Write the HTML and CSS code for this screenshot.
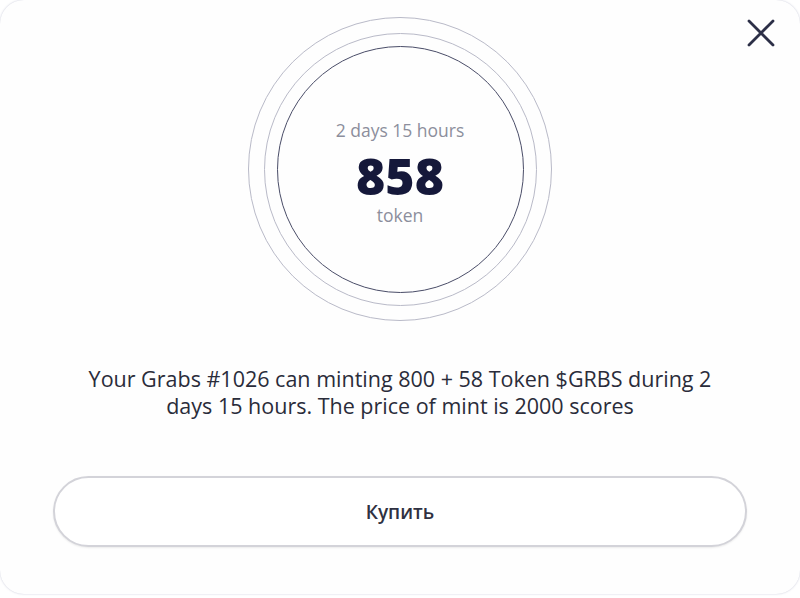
FILE: index.html
```html
<!DOCTYPE html>
<html lang="en">
<head>
<meta charset="utf-8">
<title>Mint</title>
<link rel="stylesheet" href="styles.css">
</head>
<body>
<div class="card">
  <button class="close" aria-label="Close">
    <svg width="30" height="30" viewBox="0 0 30 30"><path d="M3 3 L27 27 M27 3 L3 27" stroke="#2c2f47" stroke-width="2.8" stroke-linecap="round" fill="none"/></svg>
  </button>
  <div class="ring ring-outer">
    <div class="ring ring-middle">
      <div class="ring ring-inner">
        <div class="time">2 days 15 hours</div>
        <div class="amount">858</div>
        <div class="unit">token</div>
      </div>
    </div>
  </div>
  <p class="desc">Your Grabs #1026 can minting 800 + 58 Token $GRBS during 2 days 15 hours. The price of mint is 2000 scores</p>
  <button class="buy">Купить</button>
</div>
</body>
</html>
```
FILE: styles.css
```css
html, body {
  margin: 0;
  padding: 0;
  background: #ffffff;
}
body {
  width: 800px;
  height: 598px;
  overflow: hidden;
  font-family: "Open Sans", "Noto Sans", sans-serif;
}
.card {
  position: relative;
  box-sizing: border-box;
  width: 800px;
  height: 594px;
  background: #fefefe;
  border-radius: 24px;
  box-shadow: 0 0 2px rgba(90, 95, 140, 0.35);
  display: flex;
  flex-direction: column;
  align-items: center;
  padding-top: 17px;
}
.close {
  position: absolute;
  top: 18px;
  right: 24px;
  width: 30px;
  height: 30px;
  padding: 0;
  border: 0;
  background: none;
}
.close svg { display: block; }
.ring {
  box-sizing: border-box;
  border-radius: 50%;
  display: flex;
  align-items: center;
  justify-content: center;
}
.ring-outer {
  width: 304px;
  height: 304px;
  border: 1.5px solid #b9bac8;
}
.ring-middle {
  width: 273px;
  height: 273px;
  border: 1.5px solid #b9bac8;
}
.ring-inner {
  width: 247px;
  height: 247px;
  border: 1.5px solid #4a4d68;
  flex-direction: column;
  padding-top: 7px;
}
.time {
  font-size: 17.5px;
  color: #8c8e9c;
  line-height: 22px;
}
.amount {
  font-size: 50px;
  font-weight: 800;
  color: #15183a;
  line-height: 50px;
  margin: 10px 0 3px;
}
.unit {
  font-size: 17.5px;
  color: #8c8e9c;
  line-height: 22px;
}
.desc {
  margin: 44px 0 0;
  width: 640px;
  text-align: center;
  font-size: 21.5px;
  line-height: 27px;
  color: #2a2c3a;
}
.buy {
  margin-top: 57px;
  width: 694px;
  height: 71px;
  box-sizing: border-box;
  border: 2px solid #d3d3d9;
  border-radius: 36px;
  background: #ffffff;
  font-family: "Open Sans", "Noto Sans", sans-serif;
  font-size: 19px;
  font-weight: 600;
  color: #2f3142;
  box-shadow: 0 1px 2px rgba(0, 0, 0, 0.08);
}
```
